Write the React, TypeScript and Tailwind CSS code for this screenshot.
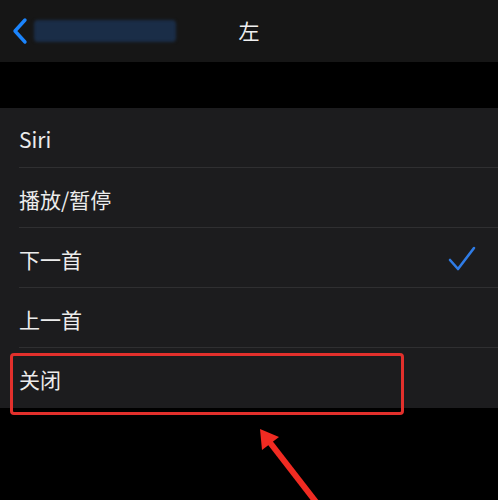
import { FC } from "react";

const items = ["Siri", "播放/暂停", "下一首", "上一首", "关闭"];

const Row: FC<{ label: string; checked?: boolean; last?: boolean }> = ({ label, checked, last }) => (
  <div className="h-[60px] pl-[19px] flex flex-col">
    <div className="flex-1 flex items-center justify-between pr-[22px] pt-[3px]">
      <span className="text-[21px] text-[#ececec] leading-none">{label}</span>
      {checked && (
        <svg width="28" height="26" viewBox="0 0 28 26" fill="none">
          <path d="M2 14 L10 23 L26 2" stroke="#2f7ce6" strokeWidth="2.6" strokeLinecap="round" strokeLinejoin="round" />
        </svg>
      )}
    </div>
    {!last && <div className="h-px bg-[#2f2f31]" />}
  </div>
);

export default function App() {
  return (
    <div
      className="relative w-[498px] h-[500px] bg-black overflow-hidden"
      style={{ fontFamily: '"Noto Sans CJK SC", "Noto Sans", sans-serif' }}>
      <div className="h-[62px] bg-[#161616] flex items-center relative">
        <svg className="ml-[11px]" width="18" height="28" viewBox="0 0 18 28" fill="none">
          <path d="M14 3 L4 14 L14 25" stroke="#1b84fc" strokeWidth="3.4" strokeLinecap="round" strokeLinejoin="round" />
        </svg>
        <div className="ml-[5px] w-[142px] h-[22px] rounded-sm bg-[#1a2d47] blur-[1.5px]" />
        <span className="absolute left-1/2 -translate-x-1/2 text-[21px] text-[#f0f0f0]">左</span>
      </div>
      <div className="h-[46px]" />
      <div className="bg-[#1c1c1e]">
        {items.map((label, i) => (
          <Row key={label} label={label} checked={i === 2} last={i === items.length - 1} />
        ))}
      </div>
      <div className="absolute left-[10px] top-[353px] w-[394px] h-[62px] border-[3px] border-[#e2302c] rounded-[4px]" />
      <svg className="absolute left-0 top-0" width="498" height="500" viewBox="0 0 498 500">
        <path d="M316 502 L268 440" stroke="#f02b22" strokeWidth="6" />
        <path d="M260 429 L262 450 L279 437 Z" fill="#f02b22" />
      </svg>
    </div>
  );
}
